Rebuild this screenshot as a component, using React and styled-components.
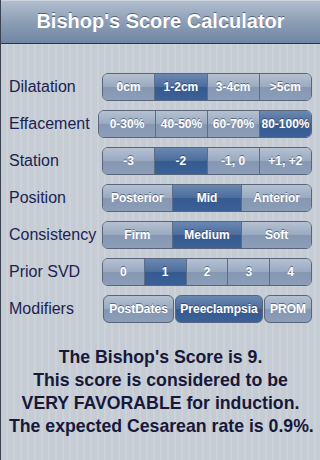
import React, { useState } from "react";
import styled, { createGlobalStyle } from "styled-components";

const GlobalStyle = createGlobalStyle`
  html, body {
    margin: 0;
    padding: 0;
  }
  body {
    font-family: "Liberation Sans", Arial, sans-serif;
    background: #c5ccd4;
  }
`;

const rows = [
  { label: "Dilatation", options: ["0cm", "1-2cm", "3-4cm", ">5cm"], selected: 1 },
  { label: "Effacement", options: ["0-30%", "40-50%", "60-70%", "80-100%"], selected: 3, wide: true },
  { label: "Station", options: ["-3", "-2", "-1, 0", "+1, +2"], selected: 1 },
  { label: "Position", options: ["Posterior", "Mid", "Anterior"], selected: 1 },
  { label: "Consistency", options: ["Firm", "Medium", "Soft"], selected: 1 },
  { label: "Prior SVD", options: ["0", "1", "2", "3", "4"], selected: 1 },
];

const modifiers = [
  { name: "PostDates", width: 71 },
  { name: "Preeclampsia", width: 88 },
  { name: "PROM", width: 48 },
];

const App = () => {
  const [picks, setPicks] = useState(rows.map((r) => r.selected));
  const [mods, setMods] = useState([false, true, false]);

  const pick = (row, idx) => {
    const next = [...picks];
    next[row] = idx;
    setPicks(next);
  };

  return (
    <Screen>
      <GlobalStyle />
      <Header>
        <Title>Bishop's Score Calculator</Title>
      </Header>
      <Body>
        {rows.map((row, r) => (
          <Row key={row.label}>
            <Label>{row.label}</Label>
            <Segmented $wide={row.wide}>
              {row.options.map((opt, i) => (
                <Segment
                  key={opt}
                  $active={picks[r] === i}
                  $first={i === 0}
                  $wide={row.wide && i === 0}
                  onClick={() => pick(r, i)}
                >
                  {opt}
                </Segment>
              ))}
            </Segmented>
          </Row>
        ))}
        <Row>
          <Label>Modifiers</Label>
          <Toggles>
            {modifiers.map((m, i) => (
              <Toggle
                key={m.name}
                $width={m.width}
                $active={mods[i]}
                onClick={() => setMods(mods.map((v, j) => (j === i ? !v : v)))}
              >
                {m.name}
              </Toggle>
            ))}
          </Toggles>
        </Row>
        <Result>
          The Bishop's Score is 9.
          <br />
          This score is considered to be
          <br />
          VERY FAVORABLE for induction.
          <br />
          The expected Cesarean rate is 0.9%.
        </Result>
      </Body>
    </Screen>
  );
};

export default App;

const Screen = styled.div`
  width: 320px;
  height: 460px;
  box-sizing: border-box;
  border-left: 1px solid #3a4352;
  overflow: hidden;
  background: repeating-linear-gradient(
    90deg,
    #c5ccd4 0px,
    #c5ccd4 5px,
    #cbd2d9 5px,
    #cbd2d9 7px
  );
`;

const Header = styled.div`
  height: 43px;
  border-bottom: 1px solid #2d3542;
  background: linear-gradient(#b4c0d0, #8d9eb6 50%, #6f86a3);
  box-shadow: inset 0 1px 0 #cdd5df;
  display: flex;
  align-items: center;
  justify-content: center;
`;

const Title = styled.h1`
  margin: 0 0 1px 0;
  font-size: 20px;
  font-weight: bold;
  color: #fff;
  text-shadow: 0 -1px 0 rgba(40, 50, 70, 0.6);
`;

const Body = styled.div`
  display: flex;
  flex-direction: column;
  gap: 9px;
  padding: 29px 8px 0 8px;
`;

const Row = styled.div`
  display: flex;
  align-items: center;
  height: 28px;
`;

const Label = styled.span`
  flex: 1 1 auto;
  min-width: 0;
  font-size: 16px;
  color: #1b1f52;
  white-space: nowrap;
`;

const Segmented = styled.div`
  flex: 0 0 auto;
  display: flex;
  width: ${(p) => (p.$wide ? "214px" : "210px")};
  height: 28px;
  box-sizing: border-box;
  border: 1px solid #58657a;
  border-radius: 6px;
  overflow: hidden;
`;

const Segment = styled.div`
  flex: ${(p) => (p.$wide ? "0 0 56px" : "1")};
  display: flex;
  align-items: center;
  justify-content: center;
  font-size: 12px;
  font-weight: bold;
  color: #fff;
  white-space: nowrap;
  text-shadow: 0 -1px 0 rgba(30, 40, 60, 0.55);
  cursor: pointer;
  border-left: ${(p) => (p.$first ? "none" : "1px solid #5e6d86")};
  background: ${(p) =>
    p.$active
      ? "linear-gradient(#6a88b2, #4c6c9c 50%, #355a90 51%, #3c6198)"
      : "linear-gradient(#b5c1d2, #99a9c0 50%, #8597b2 51%, #8b9db7)"};
`;

const Toggles = styled.div`
  flex: 0 0 auto;
  display: flex;
  gap: 1px;
`;

const Toggle = styled.div`
  width: ${(p) => p.$width}px;
  height: 28px;
  box-sizing: border-box;
  border: 1px solid #58657a;
  border-radius: 6px;
  display: flex;
  align-items: center;
  justify-content: center;
  font-size: 12px;
  font-weight: bold;
  color: #fff;
  text-shadow: 0 -1px 0 rgba(30, 40, 60, 0.55);
  cursor: pointer;
  background: ${(p) =>
    p.$active
      ? "linear-gradient(#6a88b2, #4c6c9c 50%, #355a90 51%, #3c6198)"
      : "linear-gradient(#b5c1d2, #99a9c0 50%, #8597b2 51%, #8b9db7)"};
`;

const Result = styled.p`
  margin: 14px 0 0 0;
  text-align: center;
  font-size: 17.7px;
  font-weight: bold;
  line-height: 23px;
  color: #17183a;
  white-space: nowrap;
`;
